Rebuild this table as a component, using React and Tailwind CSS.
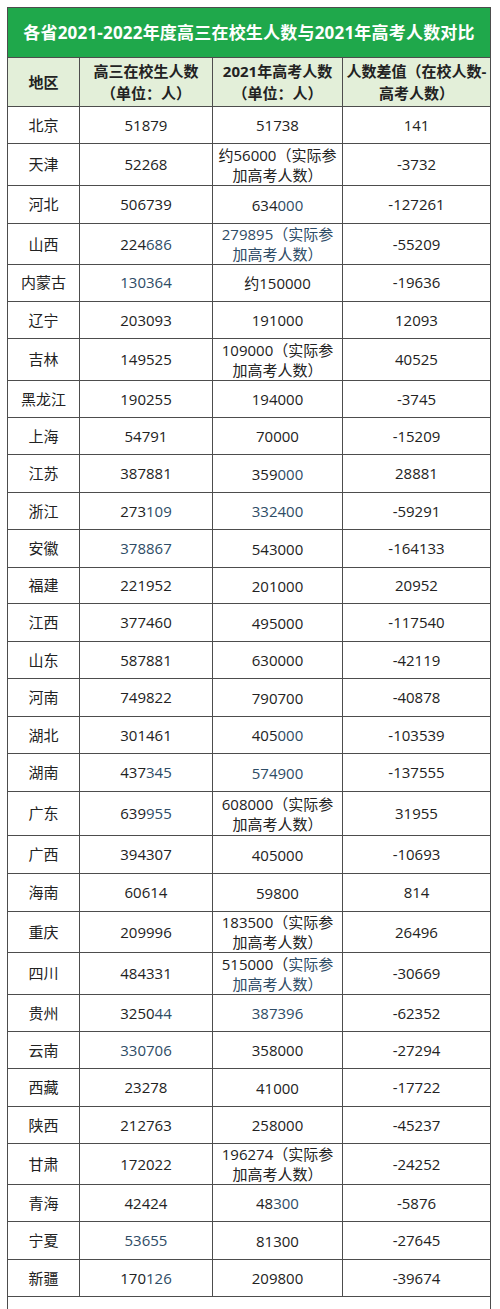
const rows = [
  { name: "北京", a: "51879", b: ["51738"], c: "141", h: "h-[37px]" },
  { name: "天津", a: "52268", b: ["约56000（实际参", "加高考人数）"], c: "-3732", h: "h-[42px]" },
  { name: "河北", a: "506739", b: ["634|000"], c: "-127261", h: "h-[38px]" },
  { name: "山西", a: "224|686", b: ["|279895（实际参", "|加高考人数）"], c: "-55209", h: "h-[40px]" },
  { name: "内蒙古", a: "|130364", b: ["约150000"], c: "-19636", h: "h-[38px]" },
  { name: "辽宁", a: "203093", b: ["191000"], c: "12093", h: "h-[37px]" },
  { name: "吉林", a: "149525", b: ["109000（实际参", "加高考人数）"], c: "40525", h: "h-[42px]" },
  { name: "黑龙江", a: "190255", b: ["194000"], c: "-3745", h: "h-[37px]" },
  { name: "上海", a: "54791", b: ["70000"], c: "-15209", h: "h-[37px]" },
  { name: "江苏", a: "387881", b: ["359|000"], c: "28881", h: "h-[38px]" },
  { name: "浙江", a: "273|109", b: ["|332400"], c: "-59291", h: "h-[37px]" },
  { name: "安徽", a: "|378867", b: ["543000"], c: "-164133", h: "h-[38px]" },
  { name: "福建", a: "221952", b: ["201000"], c: "20952", h: "h-[36px]" },
  { name: "江西", a: "377460", b: ["495000"], c: "-117540", h: "h-[38px]" },
  { name: "山东", a: "587881", b: ["630000"], c: "-42119", h: "h-[37px]" },
  { name: "河南", a: "749822", b: ["790700"], c: "-40878", h: "h-[38px]" },
  { name: "湖北", a: "301461", b: ["405|000"], c: "-103539", h: "h-[37px]" },
  { name: "湖南", a: "437|345", b: ["|574900"], c: "-137555", h: "h-[38px]" },
  { name: "广东", a: "639|955", b: ["608000（实际参", "加高考人数）"], c: "31955", h: "h-[44px]" },
  { name: "广西", a: "394307", b: ["405000"], c: "-10693", h: "h-[38px]" },
  { name: "海南", a: "60614", b: ["59800"], c: "814", h: "h-[38px]" },
  { name: "重庆", a: "209996", b: ["183500（实际参", "加高考人数）"], c: "26496", h: "h-[41px]" },
  { name: "四川", a: "484331", b: ["515000（|实际参", "|加高考人数）"], c: "-30669", h: "h-[42px]" },
  { name: "贵州", a: "3250|44", b: ["|387396"], c: "-62352", h: "h-[37px]" },
  { name: "云南", a: "|330706", b: ["358000"], c: "-27294", h: "h-[37px]" },
  { name: "西藏", a: "23278", b: ["41000"], c: "-17722", h: "h-[38px]" },
  { name: "陕西", a: "212763", b: ["258000"], c: "-45237", h: "h-[37px]" },
  { name: "甘肃", a: "172022", b: ["196274（实际参", "加高考人数）"], c: "-24252", h: "h-[41px]" },
  { name: "青海", a: "42424", b: ["48|300"], c: "-5876", h: "h-[37px]" },
  { name: "宁夏", a: "|53655", b: ["81300"], c: "-27645", h: "h-[38px]" },
  { name: "新疆", a: "170|126", b: ["209800"], c: "-39674", h: "h-[37px]" },
];

// text after "|" is drawn in the faded blue of the scan
const Txt = ({ s }) => {
  const [plain, blue] = s.split("|");
  return (
    <span>
      {plain}
      {blue !== undefined && <span className="text-[#2e4c66]">{blue}</span>}
    </span>
  );
};

const cell = "flex flex-col items-center justify-center border-r border-b border-[#4d4d4d] text-center";

export default function App() {
  return (
    <div className="min-h-[1309px] bg-white pl-[7px] pt-[7px] font-['Open_Sans','Noto_Sans_CJK_SC',sans-serif] text-[#222]">
      <div className="w-[484px] border-l border-t border-[#4d4d4d]">
        {/* Title */}
        <div className="flex h-[50px] items-center justify-center border-r border-b border-[#4d4d4d] bg-[#1fa84b] text-[17px] font-bold tracking-[0.2px] text-white">
          各省2021-2022年度高三在校生人数与2021年高考人数对比
        </div>

        {/* Header */}
        <div className="grid h-[49px] grid-cols-[72px_133px_130px_148px] bg-[#e3efd9] text-[15px] font-bold leading-[22px]">
          <div className={cell}>地区</div>
          <div className={cell}>
            <span>高三在校生人数</span>
            <span>（单位：人）</span>
          </div>
          <div className={cell}>
            <span>2021年高考人数</span>
            <span>（单位：人）</span>
          </div>
          <div className={cell}>
            <span>人数差值（在校人数-</span>
            <span>高考人数）</span>
          </div>
        </div>

        {/* Body */}
        {rows.map((r) => (
          <div key={r.name} className={`grid grid-cols-[72px_133px_130px_148px] text-[15px] ${r.h}`}>
            <div className={cell}>{r.name}</div>
            <div className={cell}>
              <Txt s={r.a} />
            </div>
            <div className={`${cell} leading-[20px]`}>
              {r.b.map((line, i) => (
                <Txt key={i} s={line} />
              ))}
            </div>
            <div className={cell}>{r.c}</div>
          </div>
        ))}

        {/* empty trailing row */}
        <div className="h-[20px] border-r border-[#4d4d4d]"></div>
      </div>
    </div>
  );
}
